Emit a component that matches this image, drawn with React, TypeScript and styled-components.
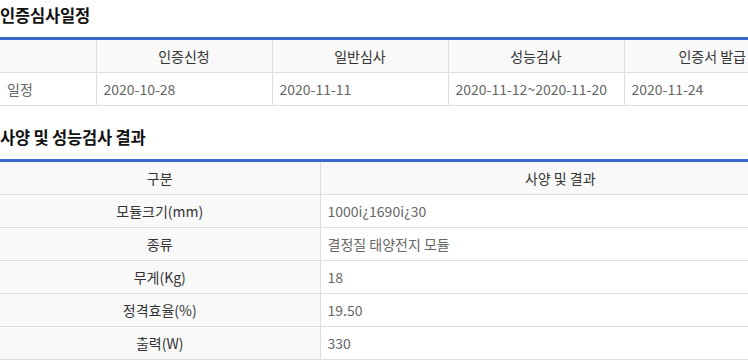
import React from 'react'
import styled, { createGlobalStyle } from 'styled-components'

const GlobalStyle = createGlobalStyle`
  html, body {
    margin: 0;
    padding: 0;
    background: #ffffff;
    overflow: hidden;
  }
  body {
    font-family: "Noto Sans CJK KR", "Noto Sans", sans-serif;
    color: #333333;
  }
`

// the tables are wider than the window, the right side is clipped
const Page = styled.div`
  width: 748px;
  overflow: hidden;
`

const Section = styled.section`
  width: 800px;
  & + & {
    margin-top: 20px;
  }
`

const Title = styled.h3`
  margin: 4px 0 11px;
  font-size: 16.5px;
  line-height: 22px;
  font-weight: 700;
  color: #111111;
  letter-spacing: -0.2px;
`

const Table = styled.table`
  width: 800px;
  border-collapse: collapse;
  table-layout: fixed;
  border-top: 3px solid #3a68c4;
  font-size: 14px;
`

const HeadCell = styled.th`
  height: 32px;
  padding: 0 7px;
  background: #f9f9f9;
  color: #333333;
  font-weight: 400;
  text-align: center;
  border-bottom: 1px solid #dddddd;
  border-left: 1px solid #dddddd;
  &:first-child {
    border-left: none;
  }
`

const Cell = styled.td<{ $label?: boolean; $center?: boolean }>`
  height: 32px;
  padding: 0 7px;
  color: ${p => (p.$label && p.$center ? '#333333' : '#666666')};
  background: ${p => (p.$label && p.$center ? '#f9f9f9' : '#ffffff')};
  text-align: ${p => (p.$center ? 'center' : 'left')};
  white-space: nowrap;
  border-bottom: 1px solid #dddddd;
  border-left: 1px solid #dddddd;
  &:first-child {
    border-left: none;
  }
`

const schedule = [
  { label: '인증신청', date: '2020-10-28' },
  { label: '일반심사', date: '2020-11-11' },
  { label: '성능검사', date: '2020-11-12~2020-11-20' },
  { label: '인증서 발급', date: '2020-11-24' },
]

const specs = [
  ['모듈크기(mm)', '1000i¿1690i¿30'],
  ['종류', '결정질 태양전지 모듈'],
  ['무게(Kg)', '18'],
  ['정격효율(%)', '19.50'],
  ['출력(W)', '330'],
]

const App = () => (
  <Page>
    <GlobalStyle />
    <Section>
      <Title>인증심사일정</Title>
      <Table>
        <colgroup>
          <col style={{ width: '12%' }} />
          <col style={{ width: '22%' }} />
          <col style={{ width: '22%' }} />
          <col style={{ width: '22%' }} />
          <col style={{ width: '22%' }} />
        </colgroup>
        <thead>
          <tr>
            <HeadCell />
            {schedule.map(s => (
              <HeadCell key={s.label}>{s.label}</HeadCell>
            ))}
          </tr>
        </thead>
        <tbody>
          <tr>
            <Cell $label>일정</Cell>
            {schedule.map(s => (
              <Cell key={s.label}>{s.date}</Cell>
            ))}
          </tr>
        </tbody>
      </Table>
    </Section>

    <Section>
      <Title>사양 및 성능검사 결과</Title>
      <Table>
        <colgroup>
          <col style={{ width: '40%' }} />
          <col style={{ width: '60%' }} />
        </colgroup>
        <thead>
          <tr>
            <HeadCell>구분</HeadCell>
            <HeadCell>사양 및 결과</HeadCell>
          </tr>
        </thead>
        <tbody>
          {specs.map(([k, v]) => (
            <tr key={k}>
              <Cell $label $center>{k}</Cell>
              <Cell>{v}</Cell>
            </tr>
          ))}
        </tbody>
      </Table>
    </Section>
  </Page>
)

export default App
